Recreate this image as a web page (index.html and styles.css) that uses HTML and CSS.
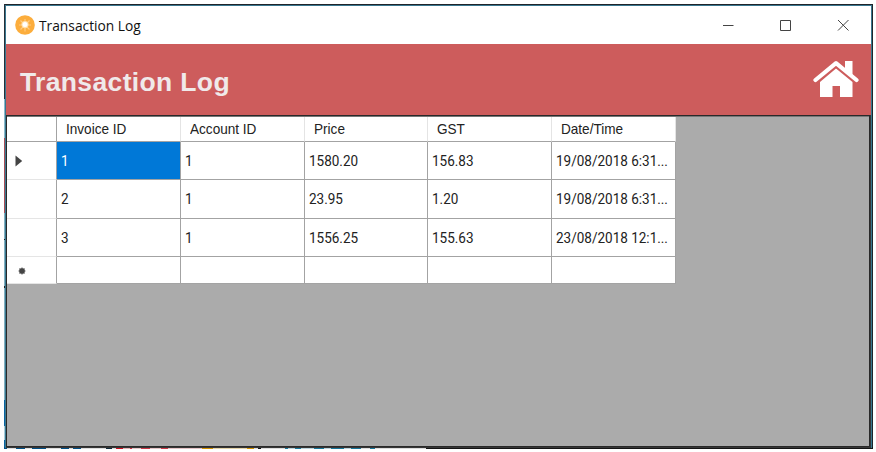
FILE: index.html
```
<!DOCTYPE html>
<html lang="en">
<head>
<meta charset="utf-8">
<title>Transaction Log</title>
<link rel="stylesheet" href="styles.css">
</head>
<body>
<div class="desktop">
<main class="window">
  <header class="titlebar">
    <svg class="app-icon" width="20" height="20" viewBox="0 0 20 20"><circle cx="10" cy="10" r="9.8" fill="#fcad3c"/><g stroke="#ffcb80" stroke-width="1.2"><path d="M10 4v12.500M4 10h12M5.500 5.500l9 9M14.500 5.500l-9 9"/></g><circle cx="10" cy="9.600" r="3.600" fill="#ffdfaa"/><circle cx="10" cy="9.600" r="2.500" fill="#fff"/></svg>
    <span class="caption">Transaction Log</span>
    <svg class="controls" width="126" height="14" viewBox="0 0 126 14" fill="none" stroke="#444"><path d="M0 7.500h10.500M57.500 2.500h10v10h-10zM115 2l10.500 10.500M125.500 2L115 12.500"/></svg>
  </header>
  <section class="banner">
    <h1>Transaction Log</h1>
    <svg class="home" width="46" height="38" viewBox="0 0 46 38"><path d="M2.500 20L23 3.200 43.500 20" fill="none" stroke="#fff" stroke-width="4.200" stroke-linecap="round" stroke-linejoin="round"/><path d="M32 1h7.500v14L32 9zM23 8.500L39.500 22V37H27V26h-7.500v11H7V22z" fill="#fff"/></svg>
  </section>
  <section class="data">
    <div class="grid">
      <div class="row head"><i></i><b><span>Invoice ID</span></b><b><span>Account ID</span></b><b><span>Price</span></b><b><span>GST</span></b><b><span>Date/Time</span></b></div>
      <div class="row"><i><svg width="8" height="12" viewBox="0 0 8 12"><path d="M.5.500L7.200 6 .5 11.500z" fill="#444"/></svg></i><div class="selected"><span>1</span></div><div><span>1</span></div><div><span>1580.20</span></div><div><span>156.83</span></div><div><span>19/08/2018 6:31...</span></div></div>
      <div class="row"><i></i><div><span>2</span></div><div><span>1</span></div><div><span>23.95</span></div><div><span>1.20</span></div><div><span>19/08/2018 6:31...</span></div></div>
      <div class="row"><i></i><div><span>3</span></div><div><span>1</span></div><div><span>1556.25</span></div><div><span>155.63</span></div><div><span>23/08/2018 12:1...</span></div></div>
      <div class="row new"><i><svg class="star" width="8" height="8" viewBox="0 0 8 8"><path d="M4 .5v7M.5 4h7M1.500 1.500l5 5M6.500 1.500l-5 5" stroke="#555" stroke-width="1.100"/><circle cx="4" cy="4" r="2.800" fill="#444"/></svg></i><div></div><div></div><div></div><div></div><div></div></div>
    </div>
  </section>
</main>
</div>
</body>
</html>
```
FILE: styles.css
```
* { box-sizing: border-box; }
body { margin: 0; background: #fff; width: 876px; height: 452px; overflow: hidden; }
.desktop {
  margin: 4px 0 0 4px; width: 869px; height: 445px; padding: 1px 1px 1px 1px;
  background:
    linear-gradient(90deg, #004f87 0 3px, #ddd 3px 12px, #004f87 12px 21px, #ddd 21px 28px, #004f87 28px 42px, #ddd 42px 57px, #004f87 57px 65px, #ddd 65px 69px, #004f87 69px 77px, #ddd 77px 102px, #10293a 102px 108px, #ddd 108px 112px, #cf1020 112px 119px, #e7b3b7 119px 126px, #cf3040 126px 128px, #e7c7c9 128px 137px, #cf3948 137px 146px, #e5c5c7 146px 157px, #cf3948 157px 164px, #e5c5c7 164px 198px, #d69400 198px 209px, #e5d4a9 209px 243px, #d69400 243px 250px, #ddd 250px 254px, #111 254px 257px, #ddd 257px 281px, #16779c 281px 284px, #bdd4dd 284px 291px, #16779c 291px 297px, #bdd4dd 297px 310px, #16779c 310px 320px, #bdd4dd 320px 327px, #16779c 327px 340px, #bdd4dd 340px 347px, #16779c 347px 357px, #ddd 357px 366px, #16779c 366px 371px, #ddd 371px 422px, #151515 422px) 0 443px / 100% 2px no-repeat,
    linear-gradient(#253039 0 95px, #8bb8c9 95px 134px, #a94c55 134px 209px, #83afbf 209px 235px, #222 235px 236px, #83afbf 236px 282px, #222 282px 284px, #83afbf 284px 396px, #0862a0 396px 422px, #a7cbd9 422px 436px, #0862a0 436px) 0 0 / 1px 100% no-repeat,
    #20252a;
}
.window { width: 867px; height: 443px; border: solid #39778f; border-width: 1px 1px 0; background: #373737; display: flex; flex-direction: column; }
.titlebar { height: 38px; flex: none; background: #fff; display: flex; align-items: center; padding: 0 22.5px 0 9px; }
.caption { margin-left: 4px; font: 14.5px/20px "Open Sans", "Noto Sans", sans-serif; color: #111; transform-origin: 0 50%; transform: translateY(1px) scaleX(.95); white-space: nowrap; }
.controls { margin-left: auto; }
.banner { height: 71px; flex: none; background: #cd5c5c; display: flex; align-items: center; justify-content: space-between; padding: 0 12px 0 14px; }
.home { margin-top: -1px; }
h1 { margin: 5px 0 0; font: bold 26.5px/32px "Liberation Sans", Arial, sans-serif; letter-spacing: .35px; color: #f0eaea; white-space: nowrap; }
.data { height: 332px; margin: 0 1px 0 0; background: #ababab; border: 1px solid #292929; box-shadow: inset 0 1px #777; padding-top: 1px; }
.grid { width: 669px; display: grid; grid-template-rows: 25px 38px 39px 38px 27px; }
.row { display: grid; grid-template-columns: 50px 124px 124px 123px 124px 124px; font: 15px/20px Roboto, sans-serif; color: #222; }
.row > * { background: #fff; border: solid #a3a3a3; border-width: 0 1px 1px 0; display: flex; align-items: center; padding-left: 4px; font-style: normal; font-weight: normal; min-width: 0; }
.row > i { border-bottom-color: #e5e5e5; padding-left: 8px; }
.row span { white-space: nowrap; transform-origin: 0 50%; transform: scaleX(.9); }
.row > b { border-right-color: #e4e4e4; padding-left: 8.5px; font-family: "Liberation Sans", Arial, sans-serif; }
.row > b span { transform: scaleX(.905); }
.head > i { border-bottom-color: #a3a3a3; }
.row > .selected { background: #0078d7; color: #fff; }
.star { margin-left: 3px; margin-top: 2px; }
```
